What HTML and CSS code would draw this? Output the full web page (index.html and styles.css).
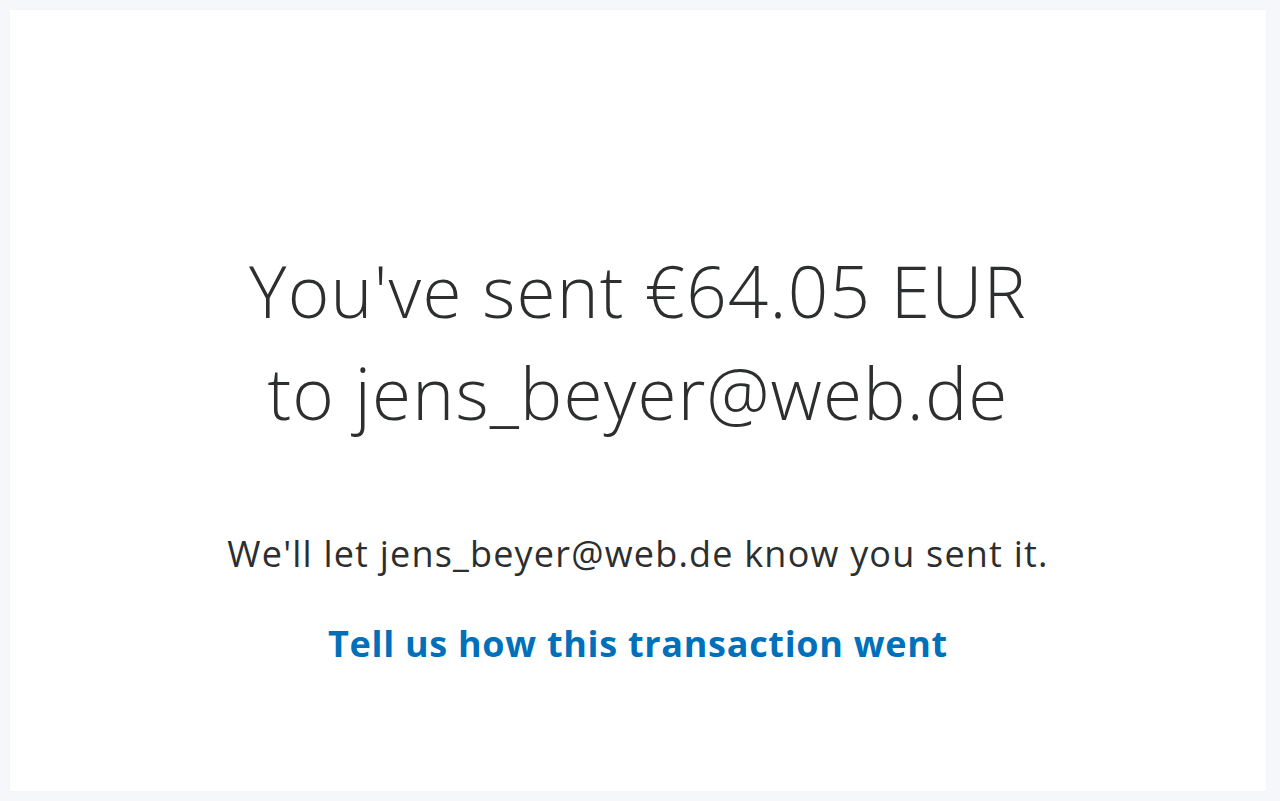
FILE: index.html
```html
<!DOCTYPE html>
<html lang="en">
<head>
<meta charset="utf-8">
<title>Payment sent</title>
<link rel="stylesheet" href="styles.css">
</head>
<body>
<main class="card">
  <section class="content">
    <h1 class="title">You've sent €64.05 EUR<br>to jens_beyer@web.de</h1>
    <p class="note">We'll let jens_beyer@web.de know you sent it.</p>
    <a class="feedback" href="#">Tell us how this transaction went</a>
  </section>
</main>
</body>
</html>
```
FILE: styles.css
```css
html, body {
  margin: 0;
  padding: 0;
}
body {
  background: #f5f7fa;
  height: 801px;
  box-sizing: border-box;
  padding: 10px 14px 10px 10px;
  font-family: "Open Sans", "Noto Sans", sans-serif;
  color: #2c2e2f;
}
.card {
  background: #ffffff;
  height: 100%;
  box-shadow: 0 0 2px rgba(0, 0, 0, 0.04);
  display: flex;
  flex-direction: column;
  align-items: center;
}
.content {
  padding-top: 230px;
  display: flex;
  flex-direction: column;
  align-items: center;
  text-align: center;
}
.title {
  margin: 0;
  font-weight: 350;
  font-size: 71px;
  line-height: 102px;
  letter-spacing: 1.2px;
}
.note {
  margin: 88px 0 0;
  font-size: 36px;
  line-height: 44px;
  letter-spacing: 1.2px;
}
.feedback {
  margin-top: 46px;
  font-size: 36px;
  line-height: 44px;
  font-weight: 700;
  letter-spacing: 0.7px;
  color: #0070ba;
  text-decoration: none;
}
```
